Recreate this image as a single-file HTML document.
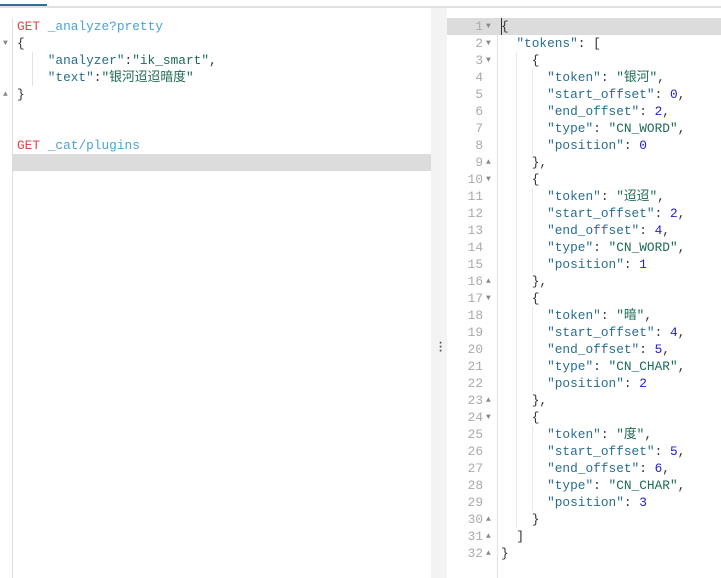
<!DOCTYPE html>
<html><head><meta charset="utf-8"><style>
body{margin:0;width:721px;height:578px;background:#fff;position:relative;overflow:hidden;font-family:"Liberation Mono","Noto Sans CJK SC",monospace;font-size:12.8px}
.a{position:absolute;white-space:pre;line-height:17px;height:17px}
.g{color:#e0474b}.u{color:#4aa3d6}.k{color:#2a6d8f}.s{color:#1d6b50}.n{color:#2020c8}.p{color:#333}
.ln{position:absolute;left:447px;width:36px;text-align:right;color:#aaa;line-height:17px;font-size:12.8px}
.f{position:absolute;font-size:8px;color:#888;line-height:17px}
</style></head><body>
<div style="position:absolute;left:0;top:6px;width:721px;height:2px;background:#e2e2e2"></div>
<div style="position:absolute;left:0;top:4px;width:47px;height:2px;background:#2c6f97"></div>
<div style="position:absolute;left:12px;top:18px;width:1px;height:560px;background:#e0e0e0"></div>
<div style="position:absolute;left:12px;top:154px;width:419px;height:17px;background:#dcdcdc"></div>
<div style="position:absolute;left:32px;top:52px;width:1px;height:34px;background:#e3e3e3"></div>
<div class="f" style="left:3px;top:35px">▼</div>
<div class="f" style="left:3px;top:86px">▲</div>
<div class="a" style="left:17px;top:18px"><span class="g">GET</span> <span class="u">_analyze?pretty</span></div>
<div class="a p" style="left:17px;top:35px">{</div>
<div class="a" style="left:17px;top:52px">    <span class="k">"analyzer"</span><span class="p">:</span><span class="s">"ik_smart"</span><span class="p">,</span></div>
<div class="a" style="left:17px;top:69px">    <span class="k">"text"</span><span class="p">:</span><span class="s">"银河迢迢暗度"</span></div>
<div class="a p" style="left:17px;top:86px">}</div>
<div class="a" style="left:17px;top:137px"><span class="g">GET</span> <span class="u">_cat/plugins</span></div>
<div style="position:absolute;left:431px;top:8px;width:16px;height:570px;background:#f3f3f3"></div>
<div style="position:absolute;left:437px;top:341px;color:#555;font-size:12px;line-height:4px;font-weight:bold">·<br>·<br>·</div>
<div style="position:absolute;left:497px;top:18px;width:1px;height:560px;background:#e0e0e0"></div>
<div style="position:absolute;left:447px;top:18px;width:274px;height:17px;background:#dcdcdc"></div>
<div style="position:absolute;left:501px;top:18px;width:1px;height:17px;background:#333"></div>
<div style="position:absolute;left:516px;top:52px;width:1px;height:476px;background:#e8e8e8"></div>
<div style="position:absolute;left:532px;top:69px;width:1px;height:85px;background:#e8e8e8"></div>
<div style="position:absolute;left:532px;top:188px;width:1px;height:85px;background:#e8e8e8"></div>
<div style="position:absolute;left:532px;top:307px;width:1px;height:85px;background:#e8e8e8"></div>
<div style="position:absolute;left:532px;top:426px;width:1px;height:85px;background:#e8e8e8"></div>
<div id="r"></div>
<script>
var L=[
['{',''],
['  <span class="k">"tokens"</span>: [',''],
['    {',''],
];
var toks=[['银河',0,2,'CN_WORD',0],['迢迢',2,4,'CN_WORD',1],['暗',4,5,'CN_CHAR',2],['度',5,6,'CN_CHAR',3]];
toks.forEach(function(t,i){
 if(i>0)L.push(['    {','']);
 L.push(['      <span class="k">"token"</span>: <span class="s">"'+t[0]+'"</span>,']);
 L.push(['      <span class="k">"start_offset"</span>: <span class="n">'+t[1]+'</span>,']);
 L.push(['      <span class="k">"end_offset"</span>: <span class="n">'+t[2]+'</span>,']);
 L.push(['      <span class="k">"type"</span>: <span class="s">"'+t[3]+'"</span>,']);
 L.push(['      <span class="k">"position"</span>: <span class="n">'+t[4]+'</span>']);
 L.push([i<3?'    },':'    }']);
});
L.push(['  ]']);L.push(['}']);
var down={1:1,2:1,3:1,10:1,17:1,24:1},up={9:1,16:1,23:1,30:1,31:1,32:1};
var h='';
L.forEach(function(l,i){
 var n=i+1,y=18+17*i;
 h+='<div class="ln" style="top:'+y+'px">'+n+'</div>';
 if(down[n])h+='<div class="f" style="left:486px;top:'+y+'px">▼</div>';
 if(up[n])h+='<div class="f" style="left:486px;top:'+y+'px">▲</div>';
 h+='<div class="a p" style="left:501px;top:'+y+'px">'+l[0]+'</div>';
});
document.getElementById('r').innerHTML=h;
</script>
</body></html>
